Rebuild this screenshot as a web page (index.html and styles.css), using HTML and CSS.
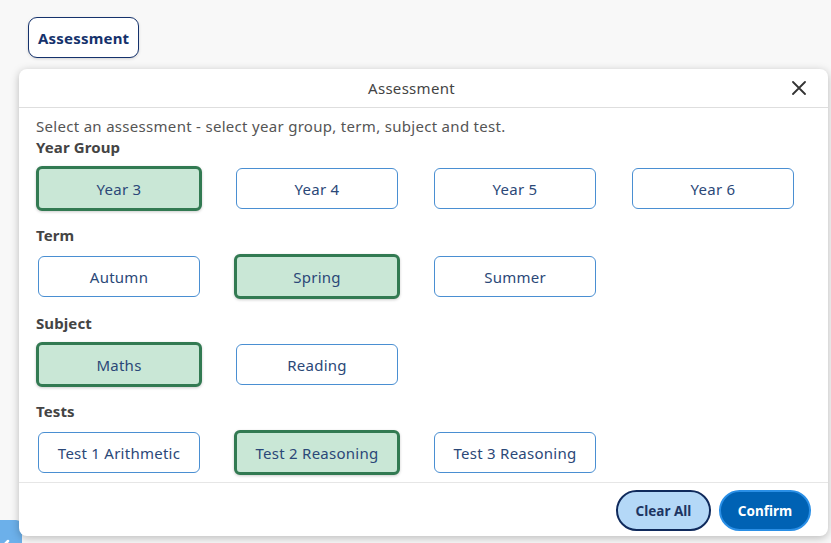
FILE: index.html
```html
<!DOCTYPE html>
<html lang="en">
<head>
    <meta charset="UTF-8">
    <title>Assessment</title>
    <link rel="stylesheet" href="styles.css">
</head>
<body>
    <div class="top">
        <button class="top-btn">Assessment</button>
    </div>

    <div class="widget">
        <svg width="30" height="30" viewBox="0 0 30 30"><path d="M8 29L16 21" stroke="#fff" stroke-width="2.5" stroke-linecap="round"/></svg>
    </div>

    <div class="modal">
        <div class="modal-head">
            <span>Assessment</span>
            <button class="close" aria-label="Close">
                <svg width="14" height="14" viewBox="0 0 14 14"><path d="M1 1L13 13M13 1L1 13" stroke="#333" stroke-width="1.8" stroke-linecap="round"/></svg>
            </button>
        </div>
        <div class="modal-body">
            <p class="intro">Select an assessment - select year group, term, subject and test.</p>

            <h3>Year Group</h3>
            <div class="options">
                <button class="opt selected">Year 3</button>
                <button class="opt">Year 4</button>
                <button class="opt">Year 5</button>
                <button class="opt">Year 6</button>
            </div>

            <h3>Term</h3>
            <div class="options">
                <button class="opt">Autumn</button>
                <button class="opt selected">Spring</button>
                <button class="opt">Summer</button>
            </div>

            <h3>Subject</h3>
            <div class="options">
                <button class="opt selected">Maths</button>
                <button class="opt">Reading</button>
            </div>

            <h3>Tests</h3>
            <div class="options">
                <button class="opt">Test 1 Arithmetic</button>
                <button class="opt selected">Test 2 Reasoning</button>
                <button class="opt">Test 3 Reasoning</button>
            </div>
        </div>
        <div class="modal-foot">
            <button class="pill clear">Clear All</button>
            <button class="pill confirm">Confirm</button>
        </div>
    </div>
</body>
</html>
```

FILE: styles.css
```css
body {
    margin: 0;
    background-color: #f8f8f8;
    font-family: "Noto Sans", Arial, sans-serif;
    color: #444;
    height: 543px;
    overflow: hidden;
}
button {
    font-family: inherit;
    cursor: pointer;
}
.top {
    padding: 17px 0 0 28px;
}
.top-btn {
    height: 41px;
    padding: 0 9px;
    background-color: #fff;
    border: 1.5px solid #15326c;
    border-radius: 9px;
    color: #15326c;
    font-size: 15px;
    font-weight: bold;
    letter-spacing: 0.2px;
    box-shadow: 0 1px 3px rgba(0, 0, 0, 0.15);
}
.widget {
    position: absolute;
    left: -8px;
    top: 520px;
    width: 30px;
    height: 30px;
    border-radius: 6px;
    background-color: #6cb0ea;
    line-height: 0;
}
.modal {
    position: relative;
    margin: 11px 0 0 19px;
    width: 809px;
    height: 467px;
    background-color: #fff;
    border-radius: 8px;
    box-shadow: 0 2px 8px rgba(0, 0, 0, 0.25);
    display: flex;
    flex-direction: column;
}
.modal-head {
    height: 38px;
    border-bottom: 1px solid #dedede;
    display: flex;
    align-items: center;
    justify-content: center;
    padding-right: 24px;
    font-size: 15px;
    letter-spacing: 0.3px;
    color: #444;
    position: relative;
}
.close {
    position: absolute;
    right: 22px;
    top: 12px;
    border: 0;
    padding: 0;
    background: none;
    line-height: 0;
}
.modal-body {
    flex: 1;
    overflow: hidden;
    padding: 8px 17px 0;
}
.intro, h3 {
    margin: 0;
    font-size: 15px;
    line-height: 21px;
    letter-spacing: 0.3px;
}
.intro {
    color: #555;
}
h3 {
    color: #444;
    font-weight: bold;
    letter-spacing: 0.1px;
}
.options {
    display: grid;
    grid-template-columns: repeat(4, 162px);
    column-gap: 36px;
    margin: 10px 0 16px 2px;
}
.opt {
    height: 41px;
    background-color: #fff;
    border: 1px solid #4a8fd2;
    border-radius: 6px;
    color: #2b4878;
    font-size: 15px;
    letter-spacing: 0.25px;
}
.opt.selected {
    margin: -2px;
    height: 45px;
    background-color: #c9e7d6;
    border: 3px solid #327a52;
    box-shadow: 0 1px 3px rgba(0, 0, 0, 0.2);
}
.modal-foot {
    height: 54px;
    border-top: 1px solid #e6e6e6;
    display: flex;
    justify-content: flex-end;
    align-items: flex-start;
    gap: 8px;
    padding: 7px 17px 0;
    box-sizing: border-box;
}
.pill {
    height: 41px;
    border-radius: 21px;
    font-size: 13.5px;
    font-weight: bold;
}
.clear {
    width: 95px;
    background-color: #b4d8f7;
    border: 2px solid #0f2a5c;
    color: #1d3563;
}
.confirm {
    width: 92px;
    background-color: #0062b4;
    border: 2px solid #2a8fe6;
    color: #fff;
}
```
